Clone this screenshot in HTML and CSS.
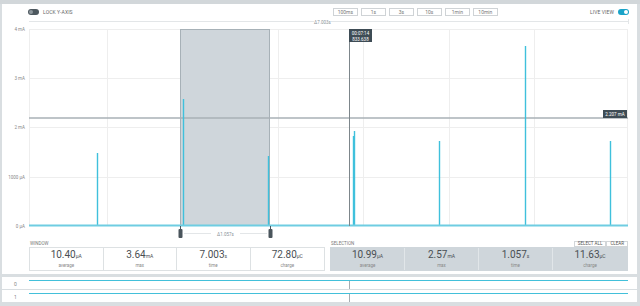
FILE: index.html
```html
<!DOCTYPE html>
<html lang="en">
<head>
    <meta charset="UTF-8">
    <title>Power Profiler</title>
    <link rel="stylesheet" href="styles.css">
</head>
<body>
    <div class="topstrip"></div>
    <div class="panel">
        <div class="toolbar">
            <div class="switch-group">
                <span class="toggle toggle-off"><span class="knob"></span></span>
                <span class="switch-label">LOCK Y-AXIS</span>
            </div>
            <div class="time-buttons">
                <button class="time-btn">100ms</button>
                <button class="time-btn">1s</button>
                <button class="time-btn">3s</button>
                <button class="time-btn">10s</button>
                <button class="time-btn">1min</button>
                <button class="time-btn">10min</button>
            </div>
            <div class="switch-group">
                <span class="switch-label">LIVE VIEW</span>
                <span class="toggle toggle-on"><span class="knob"></span></span>
            </div>
        </div>

        <svg class="plot" viewBox="2 19 635 221" width="635" height="221">
            <!-- window span -->
            <line class="span-line" x1="29" y1="21.5" x2="314" y2="21.5"/>
            <line class="span-line" x1="331" y1="21.5" x2="628" y2="21.5"/>
            <line class="span-line" x1="628.5" y1="19" x2="628.5" y2="24"/>
            <text class="tiny" x="322.5" y="23.5" text-anchor="middle">Δ7.003s</text>

            <!-- grid -->
            <g class="grid">
                <line x1="29" y1="29.5" x2="628" y2="29.5"/>
                <line x1="29" y1="78.5" x2="628" y2="78.5"/>
                <line x1="29" y1="127.5" x2="628" y2="127.5"/>
                <line x1="29" y1="177.5" x2="628" y2="177.5"/>
                <line x1="29.5" y1="29" x2="29.5" y2="226"/>
                <line x1="107.5" y1="29" x2="107.5" y2="226"/>
                <line x1="192.5" y1="29" x2="192.5" y2="226"/>
                <line x1="278.5" y1="29" x2="278.5" y2="226"/>
                <line x1="363.5" y1="29" x2="363.5" y2="226"/>
                <line x1="449.5" y1="29" x2="449.5" y2="226"/>
                <line x1="534.5" y1="29" x2="534.5" y2="226"/>
                <line x1="627.5" y1="29" x2="627.5" y2="226"/>
            </g>
            <g class="axis-labels">
                <text x="25" y="31">4 mA</text>
                <text x="25" y="80">3 mA</text>
                <text x="25" y="129">2 mA</text>
                <text x="25" y="179">1000 µA</text>
                <text x="25" y="228">0 µA</text>
            </g>

            <!-- selection -->
            <rect class="selection" x="180.5" y="29.5" width="89" height="196"/>

            <!-- marker -->
            <line class="marker" x1="29" y1="118" x2="628" y2="118"/>

            <!-- trace -->
            <g class="trace">
                <rect x="96.8" y="153" width="1.4" height="73"/>
                <rect x="182.8" y="99" width="1.4" height="127"/>
                <rect x="267.8" y="156" width="1.4" height="70"/>
                <rect x="352.8" y="136" width="1.4" height="90"/>
                <rect x="353.8" y="131" width="1.4" height="95"/>
                <rect x="438.8" y="141" width="1.4" height="85"/>
                <rect x="524.8" y="46" width="1.4" height="180"/>
                <rect x="609.8" y="141" width="1.4" height="85"/>
            </g>
            <rect class="baseline" x="29" y="224.5" width="599" height="2"/>

            <!-- cursor -->
            <line class="cursor" x1="349.5" y1="29" x2="349.5" y2="226"/>
            <rect class="tip" x="349" y="29" width="23" height="13"/>
            <text class="tip-text" x="360.5" y="34.5" text-anchor="middle">00:07:14</text>
            <text class="tip-text" x="360.5" y="40.5" text-anchor="middle">833.638</text>
            <rect class="tip" x="603" y="110" width="24" height="8"/>
            <text class="tip-text" x="615" y="116" text-anchor="middle">2.207 mA</text>

            <!-- selection handles -->
            <line class="span-line" x1="184" y1="233.5" x2="211" y2="233.5"/>
            <line class="span-line" x1="240" y1="233.5" x2="267" y2="233.5"/>
            <text class="tiny" x="225.5" y="235.5" text-anchor="middle">Δ1.057s</text>
            <rect class="handle" x="178.5" y="229" width="4" height="9" rx="1"/>
            <rect class="handle" x="268.5" y="229" width="4" height="9" rx="1"/>
            <line class="handle-stem" x1="180.5" y1="226" x2="180.5" y2="230"/>
            <line class="handle-stem" x1="270.5" y1="226" x2="270.5" y2="230"/>
        </svg>

        <div class="stats">
            <div class="stat-block">
                <div class="stat-head">
                    <span class="stat-title">WINDOW</span>
                </div>
                <div class="stat-box">
                    <div class="stat-cell"><div class="value">10.40<span class="unit">µA</span></div><div class="caption">average</div></div>
                    <div class="stat-cell"><div class="value">3.64<span class="unit">mA</span></div><div class="caption">max</div></div>
                    <div class="stat-cell"><div class="value">7.003<span class="unit">s</span></div><div class="caption">time</div></div>
                    <div class="stat-cell"><div class="value">72.80<span class="unit">µC</span></div><div class="caption">charge</div></div>
                </div>
            </div>
            <div class="stat-block">
                <div class="stat-head">
                    <span class="stat-title">SELECTION</span>
                    <span class="sel-buttons">
                        <button class="sel-btn">SELECT ALL</button><button class="sel-btn">CLEAR</button>
                    </span>
                </div>
                <div class="stat-box selected">
                    <div class="stat-cell"><div class="value">10.99<span class="unit">µA</span></div><div class="caption">average</div></div>
                    <div class="stat-cell"><div class="value">2.57<span class="unit">mA</span></div><div class="caption">max</div></div>
                    <div class="stat-cell"><div class="value">1.057<span class="unit">s</span></div><div class="caption">time</div></div>
                    <div class="stat-cell"><div class="value">11.63<span class="unit">µC</span></div><div class="caption">charge</div></div>
                </div>
            </div>
        </div>
    </div>

    <div class="digital">
        <div class="channel">
            <span class="channel-name">0</span>
            <div class="channel-track"><span class="level"></span><span class="tick"></span></div>
        </div>
        <div class="channel">
            <span class="channel-name">1</span>
            <div class="channel-track"><span class="level"></span><span class="tick"></span></div>
        </div>
    </div>
</body>
</html>
```

FILE: styles.css
```css
body {
    margin: 0;
    background-color: #d9dee1;
    font-family: Roboto, "Liberation Sans", sans-serif;
    color: #555;
    height: 306px;
    overflow: hidden;
}
.topstrip {
    height: 4px;
    background-color: #d2d7da;
}
.panel {
    margin: 0 3px 0 2px;
    background-color: #fff;
    height: 270px;
}
.toolbar {
    height: 15px;
    display: flex;
    align-items: center;
    justify-content: space-between;
    padding: 0 8px 0 26px;
}
.switch-group {
    display: flex;
    align-items: center;
    gap: 4px;
}
.switch-label {
    font-size: 5px;
    color: #666;
    letter-spacing: 0.1px;
}
.toggle {
    width: 11px;
    height: 6px;
    border-radius: 3px;
    position: relative;
}
.toggle .knob {
    position: absolute;
    top: 1px;
    width: 4px;
    height: 4px;
    border-radius: 50%;
}
.toggle-off {
    background-color: #4d585f;
}
.toggle-off .knob {
    left: 1px;
    background-color: #8e989e;
}
.toggle-on {
    background-color: #1aa3c8;
}
.toggle-on .knob {
    right: 1px;
    background-color: #fff;
}
.time-buttons {
    display: flex;
    gap: 3px;
    margin-left: 168px;
}
.time-btn {
    width: 25px;
    height: 8px;
    padding: 0;
    border: 1px solid #cfd3d6;
    background-color: #fff;
    font-family: inherit;
    font-size: 5px;
    color: #777;
    line-height: 6px;
}
.plot {
    display: block;
    font-family: Roboto, "Liberation Sans", sans-serif;
}
.span-line {
    stroke: #e3e6e8;
    stroke-width: 1;
}
.tiny {
    font-size: 4.5px;
    fill: #8a9298;
}
.grid line {
    stroke: #eeeeee;
    stroke-width: 1;
}
.axis-labels text {
    font-size: 4.5px;
    fill: #888;
    text-anchor: end;
}
.selection {
    fill: #cfd6db;
    stroke: #a7b1b7;
    stroke-width: 1;
}
.marker {
    stroke: #a9b1b6;
    stroke-width: 1.5;
}
.trace rect {
    fill: #3fc0dc;
}
.baseline {
    fill: #6fcde2;
}
.cursor {
    stroke: #7d868b;
    stroke-width: 1;
}
.tip {
    fill: #3e4c55;
}
.tip-text {
    font-size: 4.5px;
    fill: #fff;
}
.handle {
    fill: #4a555c;
}
.handle-stem {
    stroke: #4a555c;
    stroke-width: 1;
}
.stats {
    display: grid;
    grid-template-columns: 296px 298px;
    gap: 5px;
    padding: 0 0 0 27px;
}
.stat-head {
    height: 7px;
    display: flex;
    align-items: center;
    justify-content: space-between;
}
.stat-title {
    font-size: 4.5px;
    color: #777;
    padding-left: 1px;
}
.sel-buttons {
    display: flex;
}
.sel-btn {
    height: 6px;
    padding: 0 3px;
    border: 1px solid #d2d6d9;
    background-color: #fff;
    font-family: inherit;
    font-size: 4.5px;
    line-height: 4px;
    color: #555;
}
.stat-box {
    height: 24px;
    display: grid;
    grid-template-columns: repeat(4, 1fr);
    border: 1px solid #dde1e3;
    box-sizing: border-box;
}
.stat-box.selected {
    background-color: #cfd6db;
    border-color: #cfd6db;
}
.stat-cell {
    display: flex;
    flex-direction: column;
    align-items: center;
    justify-content: center;
    border-right: 1px solid #dde1e3;
}
.stat-box.selected .stat-cell {
    border-right-color: #e1e6e9;
}
.stat-cell:last-child {
    border-right: none;
}
.value {
    font-size: 10px;
    line-height: 10px;
    color: #4a4f53;
}
.unit {
    font-size: 5px;
}
.caption {
    font-size: 4.5px;
    color: #888;
    margin-top: 2px;
}
.digital {
    margin: 3px 3px 0 2px;
    background-color: #d9dee1;
}
.channel {
    height: 12px;
    display: flex;
    align-items: center;
    background-color: #fff;
    margin-bottom: 1px;
}
.channel-name {
    width: 27px;
    text-align: center;
    font-size: 5px;
    color: #888;
    padding-top: 1px;
}
.channel-track {
    flex: 1;
    height: 100%;
    position: relative;
    margin-right: 9px;
}
.level {
    position: absolute;
    left: 0;
    right: 0;
    top: 3px;
    height: 1px;
    background-color: #43c0da;
}
.tick {
    position: absolute;
    left: 320px;
    top: 4px;
    width: 1px;
    height: 8px;
    background-color: #a5adb2;
}
```
